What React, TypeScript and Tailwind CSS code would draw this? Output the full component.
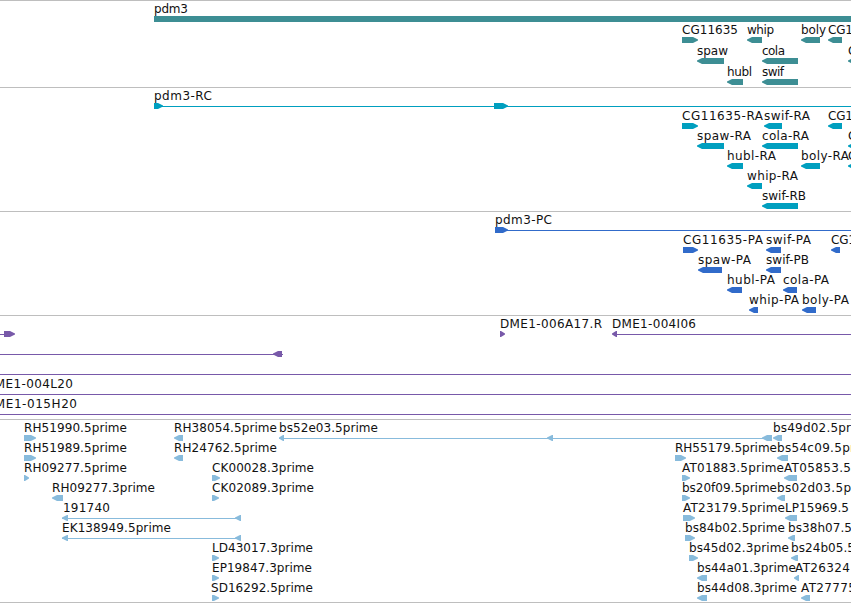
type Dir = "l" | "r" | "none";

// [start, end, direction]
type Block = [number, number, Dir];

type Feature = {
  row: number;
  // [text, x, width]
  label?: [string, number, number];
  blocks?: Block[];
  line?: [number, number];
};

type TrackData = {
  id: string;
  color: string;
  height: number;
  pitch: number;
  features: Feature[];
};

const WIDTH = 851;

function f(row: number, text: string, x: number, width: number, ...blocks: Block[]): Feature {
  return { row, label: [text, x, width], blocks };
}

const TRACKS: TrackData[] = [
  {
    id: "genes",
    color: "#3d8e94",
    height: 87,
    pitch: 21,
    features: [
      f(0, "pdm3", 154, 34, [154, 851, "none"]),
      f(1, "CG11635", 682, 56, [682, 698, "r"]),
      f(1, "whip", 747, 27, [747, 762, "l"]),
      f(1, "boly", 801, 25, [801, 820, "l"]),
      f(1, "CG1", 828, 25, [828, 842, "l"]),
      f(2, "spaw", 697, 31, [697, 724, "l"]),
      f(2, "cola", 762, 23, [762, 798, "l"]),
      f(2, "C", 848, 9, [848, 860, "l"]),
      f(3, "hubl", 727, 25, [727, 743, "l"]),
      f(3, "swif", 762, 22, [762, 798, "l"]),
    ],
  },
  {
    id: "transcripts",
    color: "#009fbf",
    height: 124,
    pitch: 20,
    features: [
      { row: 0, label: ["pdm3-RC", 154, 58], line: [154, 851], blocks: [[154, 163, "r"], [494, 508, "r"]] },
      f(1, "CG11635-RA", 682, 81, [682, 698, "r"]),
      f(1, "swif-RA", 764, 46, [764, 782, "l"]),
      f(1, "CG1", 828, 25, [828, 842, "l"]),
      f(2, "spaw-RA", 697, 54, [697, 724, "l"]),
      f(2, "cola-RA", 762, 47, [762, 798, "l"]),
      f(2, "C", 848, 9, [848, 860, "l"]),
      f(3, "hubl-RA", 727, 49, [727, 743, "l"]),
      f(3, "boly-RA", 801, 48, [801, 820, "l"]),
      f(3, "C", 848, 9, [848, 860, "l"]),
      f(4, "whip-RA", 747, 51, [747, 762, "l"]),
      f(5, "swif-RB", 762, 44, [762, 798, "l"]),
    ],
  },
  {
    id: "proteins",
    color: "#316bca",
    height: 104,
    pitch: 20,
    features: [
      { row: 0, label: ["pdm3-PC", 495, 57], line: [495, 851], blocks: [[495, 508, "r"]] },
      f(1, "CG11635-PA", 683, 80, [683, 698, "r"]),
      f(1, "swif-PA", 766, 45, [766, 781, "l"]),
      f(1, "CG1", 831, 25, [831, 840, "l"]),
      f(2, "spaw-PA", 698, 53, [698, 722, "l"]),
      f(2, "swif-PB", 766, 43, [766, 781, "l"]),
      f(3, "hubl-PA", 727, 48, [727, 742, "l"]),
      f(3, "cola-PA", 783, 46, [783, 797, "l"]),
      f(4, "whip-PA", 749, 50, [749, 758, "l"]),
      f(4, "boly-PA", 802, 47, [802, 816, "l"]),
    ],
  },
  {
    id: "bacs",
    color: "#7859a9",
    height: 104,
    pitch: 20,
    features: [
      { row: 0, line: [0, 14], blocks: [[4, 15, "r"]] },
      f(0, "DME1-006A17.R", 500, 102, [500, 505, "r"]),
      { row: 0, label: ["DME1-004I06", 612, 84], line: [613, 851], blocks: [[612, 617, "l"]] },
      { row: 1, line: [0, 283], blocks: [[273, 282, "l"]] },
      { row: 2, line: [0, 851] },
      { row: 3, label: ["DME1-004L20", -15, 88], line: [0, 851] },
      { row: 4, label: ["DME1-015H20", -15, 92], line: [0, 851] },
    ],
  },
  {
    id: "ests",
    color: "#88bbdc",
    height: 183,
    pitch: 20,
    features: [
      f(0, "RH51990.5prime", 24, 103, [24, 36, "r"]),
      f(0, "RH38054.5prime", 174, 103, [174, 183, "l"]),
      {
        row: 0,
        label: ["bs52e03.5prime", 279, 99],
        line: [279, 772],
        blocks: [[279, 284, "l"], [547, 553, "l"], [762, 772, "l"]],
      },
      f(0, "bs49d02.5pr", 773, 78, [773, 782, "l"]),
      f(1, "RH51989.5prime", 24, 103, [24, 36, "r"]),
      f(1, "RH24762.5prime", 174, 103, [174, 183, "l"]),
      f(1, "RH55179.5prime", 675, 102, [675, 686, "r"]),
      f(1, "bs54c09.5pr", 777, 78, [777, 788, "l"]),
      f(2, "RH09277.5prime", 24, 103, [24, 29, "r"]),
      f(2, "CK00028.3prime", 212, 102, [212, 220, "r"]),
      f(2, "AT01883.5prime", 682, 102, [682, 690, "r"]),
      f(2, "AT05853.5", 784, 67, [784, 797, "l"]),
      f(3, "RH09277.3prime", 52, 103, [52, 63, "l"]),
      f(3, "CK02089.3prime", 212, 102, [212, 219, "r"]),
      f(3, "bs20f09.5prime", 682, 95, [682, 690, "r"]),
      f(3, "bs02d03.5p", 777, 74, [777, 785, "l"]),
      { row: 4, label: ["191740", 63, 47], line: [62, 241], blocks: [[62, 68, "l"], [235, 241, "l"]] },
      f(4, "AT23179.5prime", 683, 102, [683, 695, "r"]),
      f(4, "LP15969.5", 785, 64, [785, 797, "l"]),
      { row: 5, label: ["EK138949.5prime", 62, 109], line: [62, 241], blocks: [[62, 68, "l"], [235, 241, "l"]] },
      f(5, "bs84b02.5prime", 685, 100, [685, 695, "r"]),
      f(5, "bs38h07.5", 788, 64, [788, 795, "l"]),
      f(6, "LD43017.3prime", 212, 101, [212, 219, "r"]),
      f(6, "bs45d02.3prime", 689, 100, [689, 698, "r"]),
      f(6, "bs24b05.5", 791, 64, [791, 798, "l"]),
      f(7, "EP19847.3prime", 212, 100, [212, 219, "r"]),
      f(7, "bs44a01.3prime", 697, 99, [697, 707, "l"]),
      f(7, "AT26324", 795, 55, [794, 799, "l"]),
      f(8, "SD16292.5prime", 211, 102, [212, 219, "r"]),
      f(8, "bs44d08.3prime", 697, 100, [697, 707, "l"]),
      f(8, "AT27775", 801, 55, [801, 810, "l"]),
    ],
  },
];

function blockPoints([start, end, dir]: Block, y: number) {
  const tip = Math.min(6, end - start);
  if (dir === "r") {
    const neck = end - tip + 1;
    return `${start},${y} ${neck},${y} ${end},${y + 2.4} ${end},${y + 3.6} ${neck},${y + 6} ${start},${y + 6}`;
  }
  if (dir === "l") {
    const neck = start + tip - 1;
    return `${end},${y} ${neck},${y} ${start},${y + 2.4} ${start},${y + 3.6} ${neck},${y + 6} ${end},${y + 6}`;
  }
  return `${start},${y} ${end},${y} ${end},${y + 6} ${start},${y + 6}`;
}

function Track({ track }: { track: TrackData }) {
  const { color, height, pitch, features } = track;
  return (
    <section className="border-t border-[#bebebe]">
      <svg width={WIDTH} height={height - 1} className="block overflow-hidden">
        {features.map((feature, i) => {
          const y = feature.row * pitch;
          return (
            <g key={i}>
              {feature.line && (
                <rect x={feature.line[0]} y={y + 18} width={feature.line[1] - feature.line[0]} height={1} fill={color} />
              )}
              {feature.blocks?.map((block) => (
                <polygon key={block[0]} points={blockPoints(block, y + 15)} fill={color} />
              ))}
              {feature.label && (
                <text
                  x={feature.label[1]}
                  y={y + 12}
                  textLength={feature.label[2]}
                  className="fill-[#111] font-['DejaVu_Sans',sans-serif] text-[12px]"
                >
                  {feature.label[0]}
                </text>
              )}
            </g>
          );
        })}
      </svg>
    </section>
  );
}

export default function App() {
  return (
    <main className="h-[603px] w-[851px] overflow-hidden bg-white">
      {TRACKS.map((track) => (
        <Track key={track.id} track={track} />
      ))}
      <div className="h-px bg-[#bebebe]" />
    </main>
  );
}
